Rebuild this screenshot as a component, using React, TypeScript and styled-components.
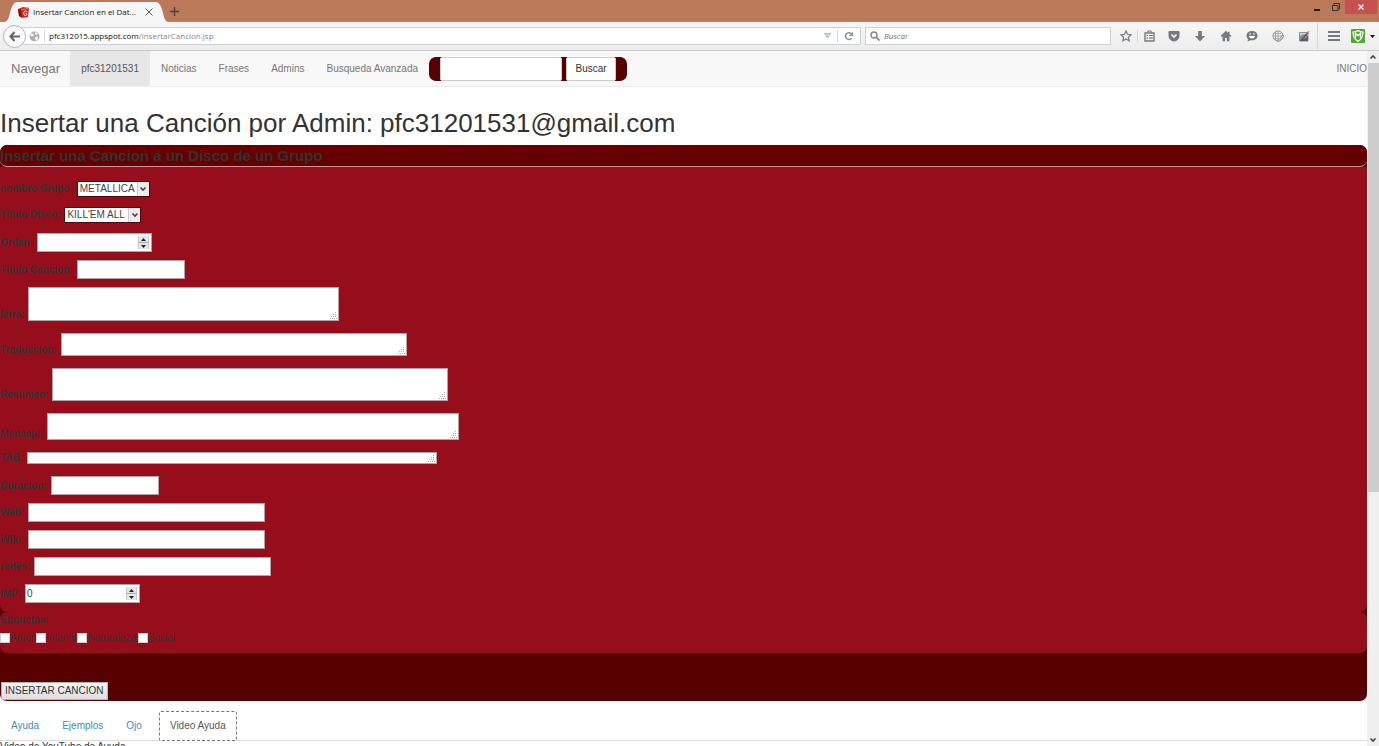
import React from "react";
import styled, { createGlobalStyle, css } from "styled-components";

const GlobalStyle = createGlobalStyle`
  * { box-sizing: border-box; }
  html, body { margin: 0; padding: 0; }
  body {
    font-family: "Liberation Sans", Arial, sans-serif;
    font-size: 10px;
    line-height: 14px;
    color: #333;
    background: #fff;
    overflow: hidden;
  }
  input, select, textarea, button { font: inherit; color: #444; margin: 0; }
`;

const Window = styled.div`
  display: flex;
  flex-direction: column;
  height: 100vh;
`;

/* ---------- Browser chrome ---------- */
const chromeFont = css`
  font-family: "Open Sans", "Noto Sans", sans-serif;
  font-size: 8px;
`;

const TitleBar = styled.header`
  ${chromeFont}
  display: flex;
  flex: none;
  height: 22px;
  padding-left: 5px;
  background: #bb7959;
  border-bottom: 1px solid #a88a7c;
`;

const TabStrip = styled.div`
  display: flex;
  flex: 1;
  align-items: flex-end;
`;

const TabEdge = styled.svg`
  display: block;
  flex: none;
  width: 12px;
  height: 20px;
  margin-bottom: -1px;
`;

const BrowserTab = styled.div`
  display: flex;
  align-items: center;
  width: 139px;
  height: 20px;
  margin-bottom: -1px;
  gap: 3px;
  background: #f5f6f7;
  color: #222;
  white-space: nowrap;
`;

const TabLabel = styled.span`
  flex: 1;
`;

const IconButton = styled.button<{ $w?: number; $h?: number }>`
  display: flex;
  flex: none;
  align-items: center;
  justify-content: center;
  width: ${(p) => p.$w ?? 26}px;
  height: ${(p) => p.$h ?? 20}px;
  padding: 0;
  border: 0;
  background: transparent;
  svg { display: block; }
`;

const WindowButton = styled(IconButton)<{ $close?: boolean }>`
  width: ${(p) => (p.$close ? 32 : 19)}px;
  height: 14px;
  background: ${(p) => (p.$close ? "#c75050" : "transparent")};
`;

const WindowButtons = styled.div`
  display: flex;
  padding-right: 2px;
`;

const Toolbar = styled.div`
  ${chromeFont}
  display: flex;
  flex: none;
  align-items: center;
  height: 29px;
  padding-right: 1px;
  background: linear-gradient(#f6f6f6, #ededee);
  border-bottom: 1px solid #c9cacc;
`;

const BackButton = styled.button`
  display: flex;
  flex: none;
  align-items: center;
  justify-content: center;
  width: 23px;
  height: 23px;
  margin: 0 -8px 0 3px;
  padding: 0;
  z-index: 1;
  border: 1px solid #b4b6b9;
  border-radius: 50%;
  background: #fafafa;
`;

const AddressBar = styled.div`
  display: flex;
  flex: 1;
  align-items: center;
  height: 18px;
  padding-left: 10px;
  border: 1px solid #ccd1d6;
  background: #fff;
`;

const Address = styled.div`
  flex: 1;
  margin-left: 4px;
  padding-left: 4px;
  border-left: 1px solid #ddd;
  line-height: 12px;
  color: #8a8a8a;
  b { font-weight: 400; color: #111; }
`;

const Divider = styled.span<{ $tall?: boolean }>`
  flex: none;
  width: 1px;
  height: ${(p) => (p.$tall ? 26 : 12)}px;
  background: #d6d7d9;
`;

const SearchBox = styled.label`
  display: flex;
  flex: none;
  align-items: center;
  gap: 4px;
  width: 246px;
  height: 18px;
  margin: 0 4px;
  padding-left: 4px;
  border: 1px solid #ccd1d6;
  background: #fff;
  input {
    flex: 1;
    min-width: 0;
    height: 14px;
    padding: 0;
    border: 0;
    outline: 0;
    background: transparent;
    font-style: italic;
  }
  input::placeholder { color: #777; }
`;

/* ---------- Page ---------- */
const Viewport = styled.div`
  display: flex;
  flex: 1;
  min-height: 0;
`;

const Page = styled.main`
  flex: 1;
  min-width: 0;
  overflow: hidden;
`;

const Scrollbar = styled.div`
  display: flex;
  flex: none;
  flex-direction: column;
  align-items: center;
  width: 12px;
  background: #f0f0f0;
`;

const ScrollTrack = styled.div`
  flex: 1;
  align-self: stretch;
  padding-left: 1px;
`;

const ScrollThumb = styled.div`
  height: 64%;
  background: #cdcdcd;
`;

const NavBar = styled.nav`
  display: flex;
  align-items: center;
  height: 36px;
  background: #f8f8f8;
  border-bottom: 1px solid #ececec;
`;

const Brand = styled.a`
  padding: 0 10px 0 11px;
  font-size: 13px;
  color: #777;
  text-decoration: none;
`;

const NavLink = styled.a<{ $active?: boolean }>`
  display: flex;
  align-items: center;
  height: 35px;
  padding: 0 11px;
  color: ${(p) => (p.$active ? "#555" : "#777")};
  background: ${(p) => (p.$active ? "#e7e7e7" : "transparent")};
  text-decoration: none;
`;

const NavSearch = styled.form`
  display: flex;
  gap: 4px;
  height: 24px;
  padding: 0 11px;
  border-radius: 7px;
  background: #560000;
  input, button {
    border: 1px solid #ccc;
    border-radius: 2px;
    background: #fff;
    color: #333;
  }
  input { width: 122px; }
  button { width: 50px; padding: 0; }
`;

const NavEnd = styled.div`
  margin-left: auto;
  a { padding: 0; }
`;

const Title = styled.h1`
  margin: 22px 0 8px;
  font-size: 26px;
  line-height: 28px;
  font-weight: 400;
  white-space: nowrap;
`;

const Panel = styled.form`
  margin: 0;
  border-radius: 7px;
  overflow: hidden;
  background: #560000;
`;

const Legend = styled.h2`
  margin: 0;
  height: 22px;
  border-bottom: 1px solid #c79a9d;
  border-radius: 7px;
  background: #600;
  font-size: 15px;
  line-height: 21px;
`;

const Section = styled.section<{ $first?: boolean }>`
  border-radius: ${(p) => (p.$first ? "0 0 7px 7px" : "7px")};
  padding: ${(p) => (p.$first ? "14px 0 1px" : "2px 0 9px")};
  background: #960e1b;
`;

const Row = styled.div`
  display: flex;
  align-items: center;
  gap: 4px;
  margin-bottom: 8px;
`;

const SelectRow = styled(Row)`
  margin-bottom: 10px;
`;

const AreaRow = styled(Row)`
  align-items: flex-end;
  margin-bottom: 12px;
`;

const FieldLabel = styled.label`
  font-weight: 700;
  line-height: 12px;
`;

const boxed = css`
  border: 1px solid #b5a0a3;
  background: #fff;
`;

const TextInput = styled.input<{ $wide?: boolean }>`
  ${boxed}
  width: ${(p) => (p.$wide ? 237 : 108)}px;
  height: 19px;
  padding: 0 2px;
`;

const NumberBox = styled.div`
  ${boxed}
  display: flex;
  align-items: center;
  width: 115px;
  height: 19px;
  padding-right: 2px;
  input {
    flex: 1;
    min-width: 0;
    padding: 0 1px;
    border: 0;
    background: transparent;
    appearance: textfield;
  }
`;

const Stepper = styled.span`
  display: flex;
  flex-direction: column;
  width: 11px;
  gap: 1px;
  background: #aaa;
  button {
    display: flex;
    align-items: center;
    justify-content: center;
    height: 6px;
    padding: 0;
    border: 1px solid #ccc;
    border-width: 0 1px;
    background: #e6e6e6;
  }
`;

const SelectBox = styled.div`
  display: flex;
  height: 16px;
  border: 1px solid #4a070d;
  background: #fff;
  select {
    appearance: none;
    padding: 0 2px;
    border: 0;
    background: transparent;
    line-height: 14px;
  }
  span {
    display: flex;
    align-items: center;
    justify-content: center;
    width: 12px;
    border-left: 1px solid #ccc;
    background: #ececec;
  }
`;

const AreaBox = styled.div<{ $w: number; $h: number }>`
  position: relative;
  width: ${(p) => p.$w}px;
  height: ${(p) => p.$h}px;
  textarea {
    ${boxed}
    display: block;
    width: 100%;
    height: 100%;
    padding: 0 2px;
    resize: none;
    overflow: hidden;
  }
  svg {
    position: absolute;
    right: 2px;
    bottom: 2px;
  }
`;

const Checks = styled.div`
  display: flex;
  gap: 2px;
  padding-top: 6px;
  label {
    display: flex;
    align-items: center;
    line-height: 12px;
  }
  input {
    appearance: none;
    width: 10px;
    height: 10px;
    border: 1px solid #ccc;
    background: #fff;
  }
`;

const Actions = styled.div`
  padding: 29px 1px 1px;
`;

const SubmitButton = styled.button`
  display: block;
  height: 18px;
  padding: 0 3px;
  border: 1px solid #b5b5b5;
  background: linear-gradient(#f4f4f4, #dedede);
  color: #333;
`;

const Tabs = styled.div`
  display: flex;
  gap: 1px;
  margin-top: 10px;
  border-bottom: 1px solid #ddd;
`;

const TabLink = styled.a<{ $active?: boolean }>`
  height: 30px;
  padding: 0 ${(p) => (p.$active ? 10 : 11)}px;
  border: solid transparent;
  border-width: 1px 0;
  border-radius: 2px;
  margin-bottom: -1px;
  color: #428bca;
  line-height: 28px;
  text-decoration: none;
  ${(p) =>
    p.$active &&
    css`
      margin-left: 5px;
      border: 1px dashed #777;
      background: #fff;
      color: #555;
    `}
`;

const TabContent = styled.p`
  margin: 0;
  line-height: 12px;
`;

/* ---------- Drawings ---------- */
const GRAY = "#75797e";

const Caret = ({ up }: { up?: boolean }) => (
  <svg width="8" height="6" viewBox="0 0 8 6">
    <path d={up ? "M1.500 4.500L4 2l2.500 2.500" : "M1.500 1.500L4 4l2.500-2.500"} fill="none" stroke="#444" strokeWidth="1.6" />
  </svg>
);

const Grip = () => (
  <svg width="7" height="7" viewBox="0 0 7 7" fill="#aaa">
    <path d="M5 0h1v1H5zM3 2h1v1H3zM5 2h1v1H5zM1 4h1v1H1zM3 4h1v1H3zM5 4h1v1H5zM0 6h1v1H0zM2 6h1v1H2zM4 6h1v1H4zM6 6h1v1H6z" />
  </svg>
);

const Favicon = () => (
  <svg width="13" height="13" viewBox="0 0 13 13">
    <path d="M1 3l5-2 6 1-1 9-5 1-4-2z" fill="#d9271c" />
    <path d="M1 3l3 1 1 8-3-2z" fill="#7d1812" />
    <path d="M4 4l8-2" stroke="#f0705c" />
    <path d="M10 5.500c-2-1-3.500 0-3.300 2s1.500 2.500 3 1.400V7.500H8.500" fill="none" stroke="#fff" strokeWidth="1" />
  </svg>
);

const Globe = () => (
  <svg width="11" height="11" viewBox="0 0 11 11">
    <circle cx="5.500" cy="5.500" r="5" fill="#a9adb1" />
    <path d="M2 2l2 .5 1 2-1.500 1L1 5zM6 1l3 1-1 2-2-.5zM6 6l3-.5L9 8 7 10 6 8z" fill="#eef0f1" />
  </svg>
);

const StepButtons = () => (
  <Stepper>
    <button type="button" aria-label="Subir">
      <svg width="5" height="3" viewBox="0 0 5 3"><path d="M0 3l2.500-3L5 3z" fill="#222" /></svg>
    </button>
    <button type="button" aria-label="Bajar">
      <svg width="5" height="3" viewBox="0 0 5 3"><path d="M0 0l2.500 3L5 0z" fill="#222" /></svg>
    </button>
  </Stepper>
);

const toolIcons: { name: string; art: React.ReactNode }[] = [
  {
    name: "Pocket",
    art: (
      <>
        <path d="M1 1.500h10V6a5 5 0 0 1-10 0z" fill={GRAY} stroke={GRAY} strokeLinejoin="round" />
        <path d="M3.500 4.500L6 7l2.500-2.500" fill="none" stroke="#fff" strokeWidth="1.600" />
      </>
    ),
  },
  { name: "Descargas", art: <path d="M4.200 1h3.600v5H11l-5 5.500L1 6h3.200z" fill={GRAY} /> },
  {
    name: "Inicio",
    art: <path d="M6 .8L.5 6l1 .9L2.500 6v5.200h2.600V8h1.800v3.200h2.600V6l1 .9 1-.9L9.500 4V1.800H8v.9z" fill={GRAY} />,
  },
  {
    name: "Hello",
    art: (
      <>
        <path d="M6 1c3.200 0 5.500 2 5.500 4.700S9.200 10.300 6 10.300c-.5 0-1 0-1.500-.1L1.500 11.500l.6-2.400C1.100 8.200.5 7.100.5 5.700.5 3 2.800 1 6 1z" fill={GRAY} />
        <path d="M3.500 3.300h1.200v1.400H3.500zM7.300 3.300h1.200v1.400H7.300zM2.800 6h6.400c-.5 1.700-1.700 2.500-3.200 2.500S3.300 7.700 2.800 6z" fill="#fff" />
      </>
    ),
  },
  {
    name: "Traducir",
    art: (
      <>
        <circle cx="6" cy="6" r="5" fill="none" stroke="#8b8f93" />
        <path d="M6 1v10M1 6h10M2 3.500h7M3.500 2v8M2 8.500h4" stroke="#a2a5a8" />
        <path d="M5.500 11L11 5l.8 1.500L7 11.500z" fill="#f2f2f2" stroke="#85898d" />
      </>
    ),
  },
  {
    name: "Captura",
    art: (
      <>
        <rect x="1" y="2" width="9.500" height="9.500" rx="1" fill="#8c8f91" />
        <path d="M2 6c2-2 5-2 7.500-1V3H2z" fill="#d4d6d7" />
        <path d="M2 10l3-3 2 2 3-3v5H2z" fill="#5c5f61" />
        <path d="M5.500 7.500l4.500-5" stroke="#555" strokeWidth="1.300" />
        <path d="M9.500 3L11 1.200" stroke="#d59a45" strokeWidth="1.600" />
      </>
    ),
  },
];

/* ---------- Form parts ---------- */
const Field = ({ id, label, wide }: { id: string; label: string; wide?: boolean }) => (
  <Row>
    <FieldLabel htmlFor={id}>{label}</FieldLabel>
    <TextInput id={id} type="text" $wide={wide} />
  </Row>
);

const NumberField = ({ id, label, value }: { id: string; label: string; value?: number }) => (
  <Row>
    <FieldLabel htmlFor={id}>{label}</FieldLabel>
    <NumberBox>
      <input id={id} type="number" defaultValue={value} />
      <StepButtons />
    </NumberBox>
  </Row>
);

const SelectField = ({ id, label, option }: { id: string; label: string; option: string }) => (
  <SelectRow>
    <FieldLabel htmlFor={id}>{label}</FieldLabel>
    <SelectBox>
      <select id={id}><option>{option}</option></select>
      <span><Caret /></span>
    </SelectBox>
  </SelectRow>
);

const AreaField = ({ id, label, w, h }: { id: string; label: string; w: number; h: number }) => (
  <AreaRow>
    <FieldLabel htmlFor={id}>{label}</FieldLabel>
    <AreaBox $w={w} $h={h}>
      <textarea id={id} />
      <Grip />
    </AreaBox>
  </AreaRow>
);

const BrowserChrome = () => (
  <>
    <TitleBar>
      <TabStrip>
        <TabEdge viewBox="0 0 12 20"><path d="M0 20C6 19 4 1 12 0v20z" fill="#f5f6f7" /></TabEdge>
        <BrowserTab>
          <Favicon />
          <TabLabel>Insertar Cancion en el Dat...</TabLabel>
          <IconButton $w={14} aria-label="Cerrar pestaña">
            <svg width="8" height="8" viewBox="0 0 8 8"><path d="M.5.5l7 7M7.500.5l-7 7" stroke="#555" /></svg>
          </IconButton>
        </BrowserTab>
        <TabEdge viewBox="0 0 12 20"><path d="M12 20C6 19 8 1 0 0v20z" fill="#f5f6f7" /></TabEdge>
        <IconButton $w={13} aria-label="Nueva pestaña">
          <svg width="9" height="9" viewBox="0 0 9 9"><path d="M4.500 0v9M0 4.500h9" stroke="#444" strokeWidth="1.400" /></svg>
        </IconButton>
      </TabStrip>
      <WindowButtons>
        <WindowButton aria-label="Minimizar">
          <svg width="6" height="8" viewBox="0 0 6 8"><path d="M0 7h6" stroke="#222" strokeWidth="2" /></svg>
        </WindowButton>
        <WindowButton aria-label="Restaurar">
          <svg width="8" height="8" viewBox="0 0 8 8"><path d="M2 2V.5h5.500V6H6M.5 2.500H6v5H.5z" fill="none" stroke="#333" /></svg>
        </WindowButton>
        <WindowButton $close aria-label="Cerrar">
          <svg width="6" height="6" viewBox="0 0 6 6"><path d="M.5.5l5 5M5.500.5l-5 5" stroke="#fff" strokeWidth="1.300" /></svg>
        </WindowButton>
      </WindowButtons>
    </TitleBar>
    <Toolbar>
      <BackButton aria-label="Atrás">
        <svg width="11" height="11" viewBox="0 0 11 11">
          <path d="M5.500 1L1.500 5.500l4 4.500M2 5.500h9" fill="none" stroke="#666a6e" strokeWidth="2.200" />
        </svg>
      </BackButton>
      <AddressBar>
        <Globe />
        <Address><b>pfc312015.appspot.com</b>/insertarCancion.jsp</Address>
        <IconButton $w={20} aria-label="Historial">
          <svg width="7" height="6" viewBox="0 0 7 6"><path d="M.5.5h6l-3 4.500z" fill="#cfd5da" stroke="#b4bcc3" /></svg>
        </IconButton>
        <Divider />
        <IconButton $w={22} aria-label="Recargar">
          <svg width="10" height="10" viewBox="0 0 10 10">
            <path d="M7.600 7.200A3.400 3.400 0 1 1 7.200 2.600" fill="none" stroke="#8a949e" strokeWidth="1.600" />
            <path d="M9 .5V5H4.800z" fill="#8a949e" />
          </svg>
        </IconButton>
      </AddressBar>
      <SearchBox>
        <svg width="10" height="10" viewBox="0 0 10 10">
          <circle cx="4" cy="4" r="3" fill="none" stroke="#888" strokeWidth="1.400" />
          <path d="M6.200 6.200L9.500 9.500" stroke="#888" strokeWidth="1.800" />
        </svg>
        <input placeholder="Buscar" aria-label="Buscar en la web" />
      </SearchBox>
      <IconButton $w={22} aria-label="Marcador">
        <svg width="12" height="12" viewBox="0 0 12 12">
          <path d="M6 1l1.500 3.300 3.600.4-2.700 2.400.8 3.600L6 8.900l-3.200 1.800.8-3.600L.9 4.700l3.600-.4z" fill="none" stroke={GRAY} strokeWidth="1.200" />
        </svg>
      </IconButton>
      <Divider />
      <IconButton $w={23} aria-label="Lista de marcadores">
        <svg width="11" height="12" viewBox="0 0 11 12">
          <path d="M1 3h9v8H1z" fill="none" stroke={GRAY} strokeWidth="1.400" />
          <path d="M3.500 2.500L4.300 1h2.400l.8 1.500M2.500 5.500H4M5 5.500h3.800M2.500 8.200H4M5 8.200h3.800" fill="none" stroke={GRAY} strokeWidth="1.200" />
        </svg>
      </IconButton>
      {toolIcons.map((t) => (
        <IconButton key={t.name} aria-label={t.name}>
          <svg width="12" height="12" viewBox="0 0 12 12">{t.art}</svg>
        </IconButton>
      ))}
      <Divider $tall />
      <IconButton $w={31} aria-label="Menú">
        <svg width="12" height="10" viewBox="0 0 12 10"><path d="M0 1h12M0 5h12M0 9h12" stroke={GRAY} strokeWidth="2" /></svg>
      </IconButton>
      <IconButton $w={18} aria-label="Seguridad">
        <svg width="14" height="14" viewBox="0 0 14 14">
          <rect width="14" height="14" rx="1" fill="#4ea832" />
          <path d="M2 3c2 0 4-.5 5-1.500C8 2.500 10 3 12 3c0 4-1 7-5 9.500C3 10 2 7 2 3z" fill="#4ea832" stroke="#fff" strokeWidth="1.200" />
          <path d="M4.500 8.500v-4L7 6.500l2.500-2v4" fill="none" stroke="#fff" strokeWidth="1.400" />
        </svg>
      </IconButton>
      <IconButton $w={11} aria-label="Más">
        <svg width="5" height="3" viewBox="0 0 5 3"><path d="M0 0h5L2.500 3z" fill="#111" /></svg>
      </IconButton>
    </Toolbar>
  </>
);

export default function App() {
  return (
    <Window>
      <GlobalStyle />
      <BrowserChrome />
      <Viewport>
        <Page>
          <NavBar>
            <Brand href="#">Navegar</Brand>
            <NavLink href="#" $active>pfc31201531</NavLink>
            <NavLink href="#">Noticias</NavLink>
            <NavLink href="#">Frases</NavLink>
            <NavLink href="#">Admins</NavLink>
            <NavLink href="#">Busqueda Avanzada</NavLink>
            <NavSearch>
              <input type="text" aria-label="Texto a buscar" />
              <button type="button">Buscar</button>
            </NavSearch>
            <NavEnd><NavLink href="#">INICIO</NavLink></NavEnd>
          </NavBar>
          <Title>Insertar una Canción por Admin: pfc31201531@gmail.com</Title>
          <Panel>
            <Legend>Insertar una Cancion a un Disco de un Grupo</Legend>
            <Section $first>
              <SelectField id="grupo" label="nombre Grupo:" option="METALLICA" />
              <SelectField id="disco" label="Titulo Disco:" option="KILL'EM ALL" />
              <NumberField id="orden" label="Orden:" />
              <Field id="titulo" label="Titulo Cancion:" />
              <AreaField id="letra" label="letra:" w={311} h={34} />
              <AreaField id="traduccion" label="Traduccion:" w={346} h={23} />
              <AreaField id="resumen" label="Resumen:" w={396} h={33} />
              <AreaField id="mensaje" label="Mensaje:" w={412} h={27} />
              <AreaField id="tab" label="TAB:" w={410} h={12} />
              <Field id="duracion" label="Duracion:" />
              <Field id="web" label="Web:" wide />
              <Field id="wiki" label="Wiki:" wide />
              <Field id="redes" label="redes:" wide />
              <NumberField id="imp" label="IMP:" value={0} />
            </Section>
            <Section>
              <FieldLabel as="div">Etiquetas:</FieldLabel>
              <Checks>
                {["Amor", "Infantil", "Naturaleza", "Social"].map((t) => (
                  <label key={t}><input type="checkbox" />{t}</label>
                ))}
              </Checks>
            </Section>
            <Actions>
              <SubmitButton type="button">INSERTAR CANCION</SubmitButton>
            </Actions>
          </Panel>
          <Tabs>
            <TabLink href="#">Ayuda</TabLink>
            <TabLink href="#">Ejemplos</TabLink>
            <TabLink href="#">Ojo</TabLink>
            <TabLink href="#" $active>Video Ayuda</TabLink>
          </Tabs>
          <TabContent>Video de YouTube de Ayuda</TabContent>
        </Page>
        <Scrollbar>
          <IconButton $w={12} $h={12} aria-label="Subir página"><Caret up /></IconButton>
          <ScrollTrack><ScrollThumb /></ScrollTrack>
          <IconButton $w={12} $h={12} aria-label="Bajar página"><Caret /></IconButton>
        </Scrollbar>
      </Viewport>
    </Window>
  );
}
